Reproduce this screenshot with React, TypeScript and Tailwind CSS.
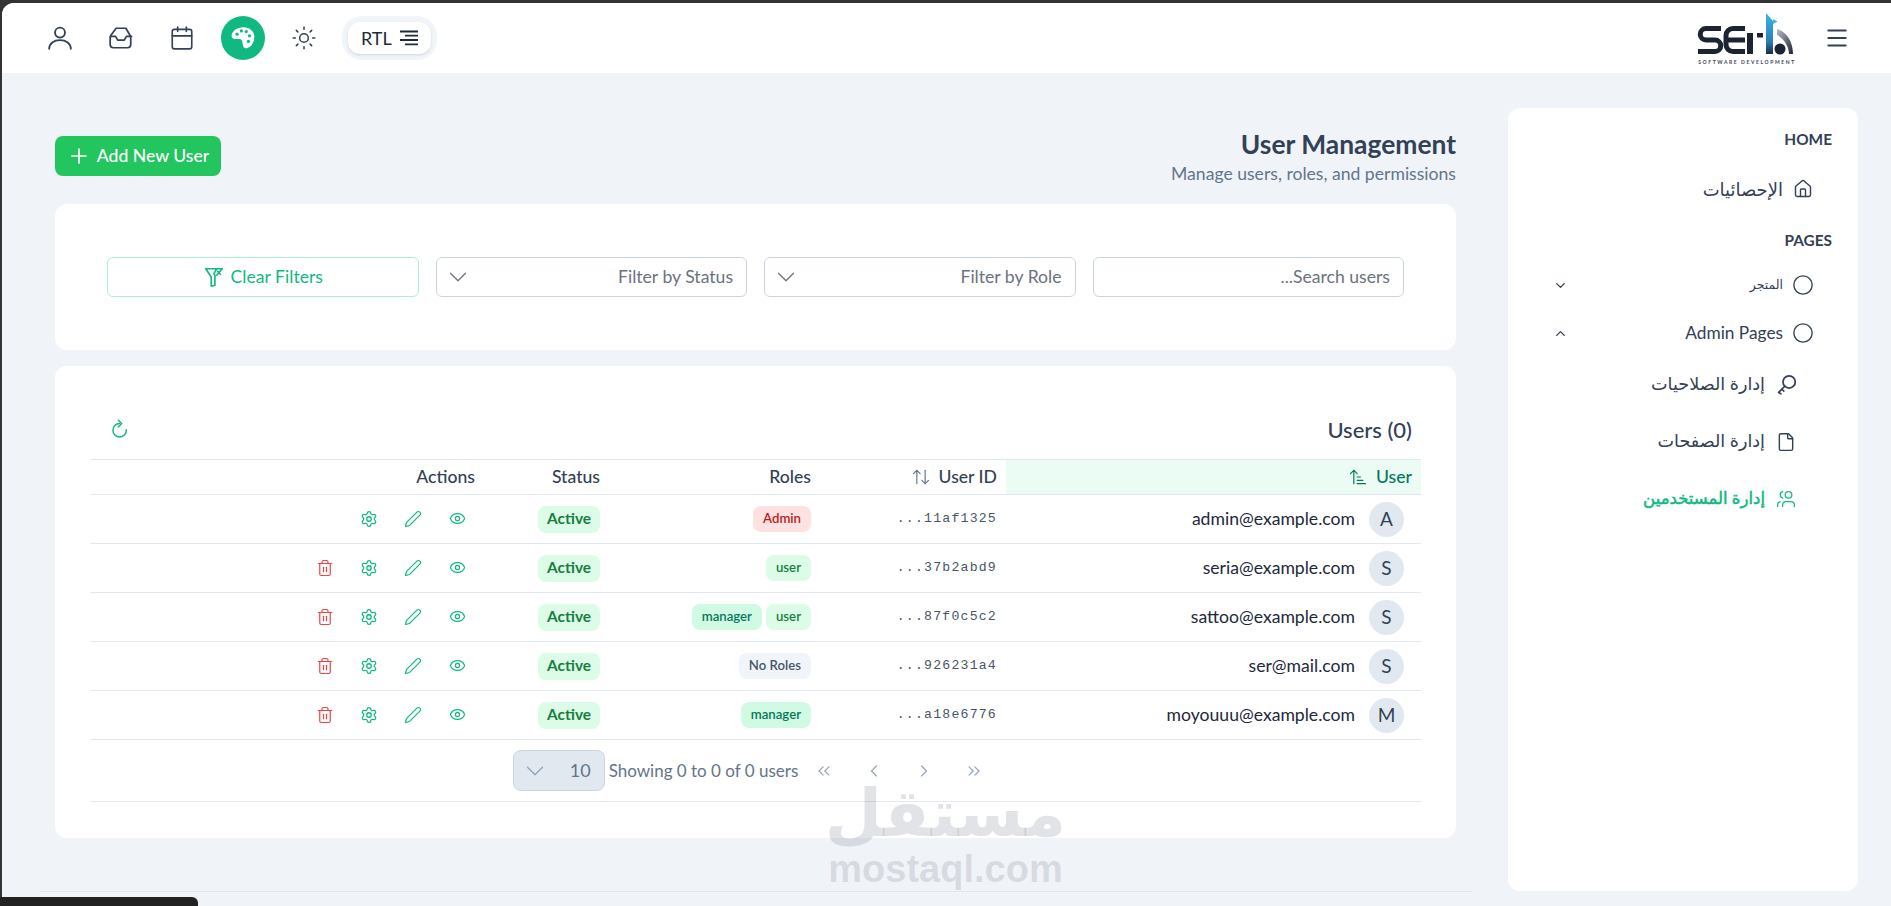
import React from 'react'
import {
  ArrowUpDown,
  ArrowUpNarrowWide,
  Calendar,
  ChevronDown,
  ChevronLeft,
  ChevronRight,
  ChevronUp,
  ChevronsLeft,
  ChevronsRight,
  Circle,
  Eye,
  File,
  House,
  Menu,
  Pen,
  Plus,
  Settings,
  Sun,
  Trash2,
  Users,
} from 'lucide-react'

const users = [
  { letter: 'A', email: 'admin@example.com', id: '11af1325...', roles: ['Admin'], canDelete: false },
  { letter: 'S', email: 'seria@example.com', id: '37b2abd9...', roles: ['user'], canDelete: true },
  { letter: 'S', email: 'sattoo@example.com', id: '87f0c5c2...', roles: ['user', 'manager'], canDelete: true },
  { letter: 'S', email: 'ser@mail.com', id: '926231a4...', roles: ['No Roles'], canDelete: true },
  { letter: 'M', email: 'moyouuu@example.com', id: 'a18e6776...', roles: ['manager'], canDelete: true },
]

const roleStyles: Record<string, string> = {
  Admin: 'bg-[#fee2e2] text-[#b91c1c]',
  user: 'bg-[#dcfce7] text-[#15803d]',
  manager: 'bg-[#d1fae5] text-[#047857]',
  'No Roles': 'bg-[#f1f5f9] text-[#475569]',
}

function UserIcon() {
  return (
    <svg width="26" height="26" viewBox="0 0 24 24" fill="none" stroke="#334155" strokeWidth="1.7" strokeLinecap="round">
      <circle cx="12" cy="7" r="4.600" />
      <path d="M2 22c0-5 4.500-8 10-8s10 3 10 8" />
    </svg>
  )
}

function InboxIcon() {
  return (
    <svg width="26" height="26" viewBox="0 0 24 24" fill="none" stroke="#334155" strokeWidth="1.600" strokeLinecap="round" strokeLinejoin="round">
      <path d="M7.500 3h9l3.800 6.500c.4.700.7 1.500.7 2.300V18a3 3 0 0 1-3 3H5a3 3 0 0 1-3-3v-6.200c0-.8.3-1.600.7-2.300z" />
      <path d="M2.300 10.500H7l2 3.500h6l2-3.500h4.700" />
    </svg>
  )
}

function PaletteIcon() {
  return (
    <svg width="26" height="26" viewBox="0 0 24 24">
      <path fill="#fff" d="M12.500 2C6.500 2 1.500 5.700 1.500 10c0 2 1.500 3 3.500 3h3.500c2 0 2.800 1.200 3 3 .2 2 .6 5.500 3 5.500 3.500 0 8-4.500 8-10.500C22.500 5.500 18 2 12.500 2z" />
      <circle cx="6.500" cy="8.500" r="1.500" fill="#10b981" />
      <circle cx="10.500" cy="5.500" r="1.500" fill="#10b981" />
      <circle cx="15" cy="6" r="1.500" fill="#10b981" />
      <circle cx="18" cy="10" r="1.500" fill="#10b981" />
      <circle cx="17" cy="15" r="1.500" fill="#10b981" />
    </svg>
  )
}

function KeyIcon() {
  return (
    <svg width="21" height="21" viewBox="0 0 24 24" fill="none" stroke="#334155" strokeWidth="2" strokeLinecap="round" strokeLinejoin="round">
      <circle cx="15" cy="9" r="7" />
      <path d="M10 14 3 21l2.500 1.500M6.500 17.500l2.500 2" />
    </svg>
  )
}

function FilterClearIcon() {
  return (
    <svg width="22" height="22" viewBox="0 0 24 24" fill="none" stroke="#10b981" strokeWidth="1.800" strokeLinecap="round" strokeLinejoin="round">
      <path d="M3 3h12l-3 5 1 2v11l-4 1v-10z" />
      <path d="M13 3h8l-6 7M19 9l-3-3" />
    </svg>
  )
}

function RefreshIcon() {
  return (
    <svg width="20" height="20" viewBox="0 0 24 24" fill="none" stroke="#10b981" strokeWidth="1.800" strokeLinecap="round" strokeLinejoin="round">
      <path d="M11.500 5.500A8 8 0 1 0 19.500 13" />
      <path d="M10 1.500l4 4-4 4" />
    </svg>
  )
}

function Logo() {
  return (
    <div className="flex flex-col items-center w-[100px]" dir="ltr">
      <svg width="100" height="44" viewBox="0 0 100 44">
        <defs>
          <linearGradient id="spire" x1="0" y1="0" x2="0" y2="1">
            <stop offset="0" stopColor="#38b6e8" />
            <stop offset="0.7" stopColor="#2b7fb0" />
            <stop offset="1" stopColor="#1c2a3e" />
          </linearGradient>
          <linearGradient id="arc" x1="0" y1="0" x2="1" y2="1">
            <stop offset="0" stopColor="#b9bec8" />
            <stop offset="1" stopColor="#1c2433" />
          </linearGradient>
        </defs>
        <path d="M24 16.500H9a5.700 5.700 0 0 0 0 11.500h9a5.700 5.700 0 0 1 0 11.500H1" fill="none" stroke="#1c2433" strokeWidth="5" />
        <path d="M48 16.500H36a7 7 0 0 0-7 7v9a7 7 0 0 0 7 7h12M31 28h17" fill="none" stroke="#1c2433" strokeWidth="5" />
        <rect x="50" y="21" width="6" height="21" fill="#1c2433" />
        <rect x="60" y="21" width="6" height="4.500" fill="#1c2433" />
        <path d="M69 1l7 8v33h-7z" fill="url(#spire)" />
        <path d="M76 7l4.500 2.500-4.500 2.500z" fill="#38b6e8" />
        <path d="M80 17c10 3 16 13 16 25h-4c0-8-6-16-12-19z" fill="url(#arc)" />
        <circle cx="83" cy="37" r="5.500" fill="#1c2433" />
      </svg>
      <span className="text-[5px] leading-[6px] tracking-[1.6px] font-bold text-[#3b4453] whitespace-nowrap mt-[3px]">SOFTWARE DEVELOPMENT</span>
    </div>
  )
}

function TopBar() {
  return (
    <header className="h-[70px] bg-white rounded-tl-xl flex items-center justify-between pr-[41px] pl-[27px] shrink-0">
      <div className="flex items-center gap-[27px]">
        <Menu size={26} strokeWidth={1.8} className="text-[#334155]" />
        <Logo />
      </div>
      <div className="flex items-center" dir="ltr">
        <div className="w-[61px] flex justify-center"><UserIcon /></div>
        <div className="w-[61px] flex justify-center"><InboxIcon /></div>
        <div className="w-[61px] flex justify-center"><Calendar size={26} strokeWidth={1.5} className="text-[#334155]" /></div>
        <div className="w-[61px] flex justify-center">
          <div className="w-[44px] h-[44px] rounded-full bg-[#10b981] flex items-center justify-center"><PaletteIcon /></div>
        </div>
        <div className="w-[61px] flex justify-center"><Sun size={26} strokeWidth={1.4} className="text-[#334155]" /></div>
        <div className="ml-[8px] p-[6px] rounded-[20px] bg-[#f1f5f9]">
          <div className="flex items-center gap-2 h-[32px] px-[13px] bg-white rounded-[12px] shadow-sm text-[18px] text-[#1e293b]">
            RTL
            <svg width="18" height="16" viewBox="0 0 18 16" stroke="#1e293b" strokeWidth="1.800">
              <path d="M0 1.500h18M5 5.700h13M0 10h18M5 14.300h13" />
            </svg>
          </div>
        </div>
      </div>
    </header>
  )
}

function SubItem({ icon, label, active }: { icon: React.ReactNode; label: string; active?: boolean }) {
  return (
    <div className={`flex items-center gap-[10px] h-[57px] pr-[61px] ${active ? 'text-[16.5px] text-[#10b981] [-webkit-text-stroke:0.5px_#10b981]' : 'text-[17.6px] text-[#334155]'}`}>
      <div className="w-[22px] flex justify-center">{icon}</div>
      <span>{label}</span>
    </div>
  )
}

function Sidebar() {
  return (
    <aside className="w-[350px] h-[783px] shrink-0 bg-white rounded-xl pt-[21px] text-[#334155]">
      <div className="pr-[26px] text-[15.4px] leading-[20px] font-bold text-[#334155]">HOME</div>
      <div className="flex items-center gap-[9px] pr-[44px] h-[22px] mt-[29px] text-[18px]">
        <div className="w-[22px] flex justify-center"><House size={20} strokeWidth={1.7} /></div>
        <span>الإحصائيات</span>
      </div>
      <div className="pr-[26px] text-[15.4px] leading-[20px] font-bold mt-[30px]">PAGES</div>
      <div className="flex items-center justify-between pr-[44px] pl-[45px] h-[22px] mt-[24px]">
        <div className="flex items-center gap-[9px] text-[12.5px]">
          <Circle size={22} strokeWidth={1.5} />
          <span>المتجر</span>
        </div>
        <ChevronDown size={15} strokeWidth={2.2} />
      </div>
      <div className="flex items-center justify-between pr-[44px] pl-[45px] h-[22px] mt-[26px]">
        <div className="flex items-center gap-[9px] text-[17.3px]">
          <Circle size={22} strokeWidth={1.5} />
          <span>Admin Pages</span>
        </div>
        <ChevronUp size={15} strokeWidth={2.2} />
      </div>
      <div className="mt-[12px]">
        <SubItem icon={<KeyIcon />} label="إدارة الصلاحيات" />
        <SubItem icon={<File size={20} strokeWidth={1.7} />} label="إدارة الصفحات" />
        <SubItem icon={<Users size={20} strokeWidth={1.5} className="-scale-x-100" />} label="إدارة المستخدمين" active />
      </div>
    </aside>
  )
}

function SelectBox({ label }: { label: string }) {
  return (
    <div className="h-[40px] border border-[#cbd5e1] rounded-md flex items-center justify-between pr-[13px] pl-[6px] text-[17.6px] text-[#6b7280] bg-white">
      <span>{label}</span>
      <ChevronDown size={30} strokeWidth={1} className="text-[#6b7280]" />
    </div>
  )
}

function Filters() {
  return (
    <section className="bg-white rounded-xl h-[146px] px-[52px] grid grid-cols-4 items-center gap-[17px] mt-[14px]">
      <div className="h-[40px] border border-[#cbd5e1] rounded-md flex items-center px-[13px] text-[17.6px] text-[#6b7280]">Search users...</div>
      <SelectBox label="Filter by Role" />
      <SelectBox label="Filter by Status" />
      <div className="h-[40px] border border-[#a7f3d0] rounded-md flex items-center justify-center gap-[6px] text-[17.6px] text-[#10b981]">
        <span>Clear Filters</span>
        <FilterClearIcon />
      </div>
    </section>
  )
}

function UsersTable() {
  return (
    <section className="bg-white rounded-xl h-[472px] mt-[16px] px-[35px] pt-[40px]">
      <div className="flex items-center justify-between h-[46px] mb-[7px] pr-[9px] pl-[20px]">
        <span dir="ltr" className="text-[22px] font-medium text-[#334155]">Users (0)</span>
        <RefreshIcon />
      </div>
      <table className="w-full table-fixed border-collapse text-[#334155]">
        <colgroup>
          <col className="w-[415px]" />
          <col className="w-[186px]" />
          <col className="w-[211px]" />
          <col className="w-[125px]" />
          <col />
        </colgroup>
        <thead>
          <tr className="h-[35px] border-y border-[#e2e8f0] text-[17.6px]">
            <th className="px-[9px] font-medium text-right bg-[#eafcf4] text-[#047857]">
              <span className="inline-flex items-center gap-[8px]">User <ArrowUpNarrowWide size={20} strokeWidth={1.4} /></span>
            </th>
            <th className="px-[9px] font-medium text-right">
              <span className="inline-flex items-center gap-[8px]">User ID <ArrowUpDown size={20} strokeWidth={1.4} className="text-[#64748b]" /></span>
            </th>
            <th className="px-[9px] font-medium text-right">Roles</th>
            <th className="px-[9px] font-medium text-right">Status</th>
            <th className="px-[9px] font-medium text-right">Actions</th>
          </tr>
        </thead>
        <tbody>
          {users.map((u) => (
            <tr key={u.id} className="h-[49px] border-b border-[#e2e8f0]">
              <td className="pr-[17px]">
                <div className="flex items-center gap-[14px]">
                  <div className="w-[35px] h-[35px] rounded-full bg-[#e2e8f0] flex items-center justify-center text-[19px]">{u.letter}</div>
                  <span className="text-[17.6px] text-[#1e293b]">{u.email}</span>
                </div>
              </td>
              <td className="px-[9px] text-[13.2px] text-[#475569] font-['Liberation_Mono',monospace] tracking-[1.200px]">{u.id}</td>
              <td className="px-[9px]">
                <div className="flex gap-[4px]">
                  {u.roles.map((r) => (
                    <span key={r} className={`h-[26px] px-[10px] rounded-lg flex items-center text-[13.2px] font-semibold ${roleStyles[r]}`}>{r}</span>
                  ))}
                </div>
              </td>
              <td className="px-[9px]">
                <span className="inline-flex items-center h-[27px] px-[9px] rounded-lg bg-[#dcfce7] text-[#15803d] text-[15.4px] font-bold">Active</span>
              </td>
              <td className="pr-[5px]">
                <div className="flex">
                  <div className="w-[44px] flex justify-center"><Eye size={17} strokeWidth={1.7} className="text-[#10b981]" /></div>
                  <div className="w-[44px] flex justify-center"><Pen size={18} strokeWidth={1.6} className="text-[#10b981]" /></div>
                  <div className="w-[44px] flex justify-center"><Settings size={18} strokeWidth={1.7} className="text-[#10b981]" /></div>
                  {u.canDelete && <div className="w-[44px] flex justify-center"><Trash2 size={18} strokeWidth={1.6} className="text-[#ef4444]" /></div>}
                </div>
              </td>
            </tr>
          ))}
        </tbody>
      </table>
      <div className="h-[62px] border-b border-[#e2e8f0] flex items-start justify-center pt-[10px]" dir="ltr">
        <div className="flex items-center pr-[4px]">
          <div className="w-[92px] h-[41px] bg-[#e2e8f0] border border-[#cbd5e1] rounded-lg flex items-center justify-between pl-[6px] pr-[13px] text-[18px] text-[#64748b]">
            <ChevronDown size={30} strokeWidth={1} className="text-[#94a3b8]" />
            <span>10</span>
          </div>
          <span className="ml-[4px] text-[17px] text-[#64748b]">Showing 0 to 0 of 0 users</span>
          <div className="flex items-center ml-[16px] text-[#94a3b8]">
            <div className="w-[50px] flex"><ChevronsLeft size={20} strokeWidth={1.4} /></div>
            <div className="w-[50px] flex"><ChevronLeft size={20} strokeWidth={1.4} /></div>
            <div className="w-[50px] flex"><ChevronRight size={20} strokeWidth={1.4} /></div>
            <div className="w-[30px] flex"><ChevronsRight size={20} strokeWidth={1.4} /></div>
          </div>
        </div>
      </div>
    </section>
  )
}

export default function App() {
  return (
    <div dir="rtl" className="relative h-screen overflow-hidden bg-[#333333] pt-[3px] pl-[2px] font-['Lato','Noto_Sans','DejaVu_Sans',sans-serif]">
      <div className="h-full bg-[#f0f4f8] rounded-tl-xl">
        <TopBar />
        <div className="flex pr-[33px] pt-[35px] gap-[52px]">
          <Sidebar />
          <main className="flex-1 pl-[53px] pt-[17px]">
            <div className="flex items-center justify-between h-[65px]">
              <div className="mb-[2px]">
                <h1 className="text-[26.4px] leading-[32px] mb-[2px] font-bold text-[#334155]">User Management</h1>
                <p className="text-[17.6px] leading-[24px] text-[#64748b]">Manage users, roles, and permissions</p>
              </div>
              <button className="h-[40px] w-[166px] rounded-lg bg-[#22c55e] text-white text-[17.6px] font-medium flex flex-row-reverse items-center justify-center gap-[6px] mb-[3px]">
                <Plus size={24} strokeWidth={1.7} />
                Add New User
              </button>
            </div>
            <Filters />
            <UsersTable />
          </main>
        </div>
      </div>
      <div className="absolute left-[40px] top-[891px] w-[1433px] border-t border-[#e2e8f0]" />
      <div className="absolute left-0 bottom-0 w-[198px] h-[9px] bg-[#222222] rounded-tr-md" />
      <div className="absolute left-[832px] top-[768px] w-[227px] flex flex-col items-center whitespace-nowrap text-[#6b7280]/20 pointer-events-none select-none">
        <div className="text-[66px] leading-[86px] font-bold">مستقل</div>
        <div className="text-[38px] leading-[38px] -mt-[4px] font-bold font-['Liberation_Sans',sans-serif]" dir="ltr">mostaql.com</div>
      </div>
    </div>
  )
}
